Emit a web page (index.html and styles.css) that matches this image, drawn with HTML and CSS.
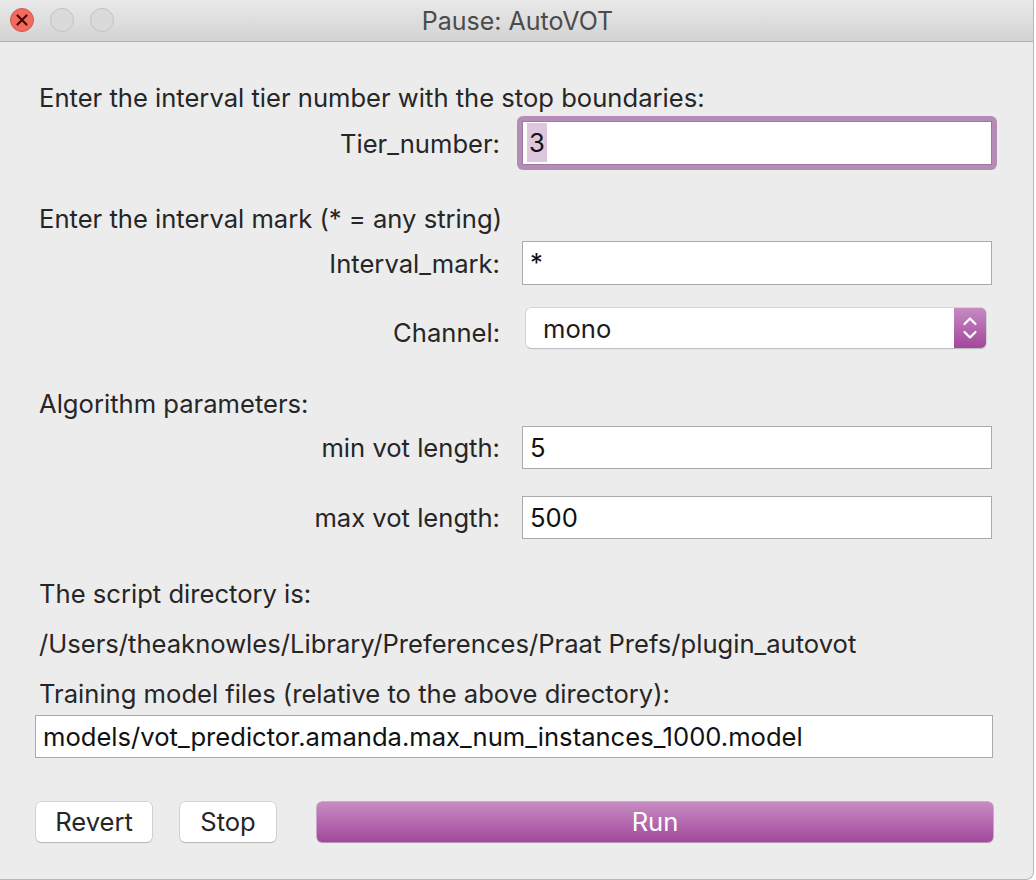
FILE: index.html
```html
<!DOCTYPE html>
<html>
<head>
<meta charset="utf-8">
<link rel="stylesheet" href="styles.css">
</head>
<body>
<div class="window">
  <div class="titlebar">
    <div class="lights">
      <span class="light close">
        <svg width="24" height="24" viewBox="0 0 24 24"><path d="M7.5 7.5 L16.5 16.5 M16.5 7.5 L7.5 16.5" stroke="#4a0502" stroke-width="2.2" stroke-linecap="round"/></svg>
      </span>
      <span class="light"></span>
      <span class="light"></span>
    </div>
    <div class="title">Pause: AutoVOT</div>
  </div>
  <div class="content">
    <div class="text h1">Enter the interval tier number with the stop boundaries:</div>
    <div class="row r-tier">
      <div class="label">Tier_number:</div>
      <div class="ring"><div class="field"><span class="sel">3</span></div></div>
    </div>
    <div class="text h2">Enter the interval mark (* = any string)</div>
    <div class="row r-mark">
      <div class="label">Interval_mark:</div>
      <div class="field plain">*</div>
    </div>
    <div class="row r-chan">
      <div class="label">Channel:</div>
      <div class="select">
        <span class="sel-text">mono</span>
        <span class="arrows">
          <svg width="32" height="40" viewBox="0 0 32 40"><path d="M10.5 16 L16 10.5 L21.5 16 M10.5 24 L16 29.5 L21.5 24" fill="none" stroke="#fff" stroke-width="2.2" stroke-linecap="round" stroke-linejoin="round"/></svg>
        </span>
      </div>
    </div>
    <div class="text h3">Algorithm parameters:</div>
    <div class="row r-min">
      <div class="label">min vot length:</div>
      <div class="field plain">5</div>
    </div>
    <div class="row r-max">
      <div class="label">max vot length:</div>
      <div class="field plain">500</div>
    </div>
    <div class="text h4">The script directory is:</div>
    <div class="text h5">/Users/theaknowles/Library/Preferences/Praat Prefs/plugin_autovot</div>
    <div class="text h6">Training model files (relative to the above directory):</div>
    <div class="field wide">models/vot_predictor.amanda.max_num_instances_1000.model</div>
    <div class="buttons">
      <div class="btn revert">Revert</div>
      <div class="btn stop">Stop</div>
      <div class="btn run">Run</div>
    </div>
  </div>
</div>
</body>
</html>
```

FILE: styles.css
```css
html, body {
  margin: 0;
  padding: 0;
  background: #ffffff;
}
body {
  width: 1036px;
  height: 880px;
  overflow: hidden;
  font-family: "Inter", "Liberation Sans", sans-serif;
  color: #262626;
}
.window {
  width: 1033px;
  height: 879px;
  background: #ececec;
  border-right: 1px solid #b8b8b8;
  border-bottom: 1px solid #b8b8b8;
  border-bottom-right-radius: 8px;
  overflow: hidden;
}
.titlebar {
  height: 41px;
  background: linear-gradient(#e9e9e9, #d3d3d3);
  border-bottom: 1px solid #b3b3b3;
  position: relative;
  display: flex;
  align-items: center;
  justify-content: center;
}
.lights {
  position: absolute;
  left: 10px;
  top: 8px;
  display: flex;
  gap: 16px;
}
.light {
  width: 22px;
  height: 22px;
  border-radius: 50%;
  border: 1px solid #c2c2c2;
  background: #dadada;
  display: flex;
  align-items: center;
  justify-content: center;
}
.light.close {
  background: #ef6b5f;
  border-color: #d8574c;
}
.light.close svg { flex: none; }
.light svg { display: block; }
.title {
  font-size: 25px;
  color: #4b4b4b;
  margin-left: 2px;
}
.content {
  padding: 43px 0 0 39px;
  font-size: 25.6px;
}
.text {
  height: 26px;
  line-height: 26px;
  white-space: nowrap;
}
.h2 { margin-top: 36px; }
.h3 { margin-top: 43px; }
.h4 { margin-top: 42px; }
.h5 { margin-top: 24px; }
.h6 { margin-top: 24px; }
.row {
  display: flex;
  align-items: center;
}
.label {
  width: 461px;
  text-align: right;
  flex: none;
}
.r-tier { margin-top: 5px; }
.r-tier .ring {
  margin-left: 17px;
  width: 470px;
  padding: 5px;
  background: #b48cb6;
  border-radius: 6px;
  box-sizing: content-box;
}
.field {
  background: #fff;
  border: 1px solid #aaaaaa;
  box-sizing: border-box;
  height: 44px;
  line-height: 42px;
  padding-left: 7px;
  font-size: 25.6px;
  color: #111;
  white-space: nowrap;
}
.ring .field {
  border-color: #9c7a9f;
  padding-left: 4px;
}
.sel {
  background: #dcc7df;
  padding: 4px 2px;
}
.field.plain {
  margin-left: 22px;
  width: 470px;
}
.r-mark { margin-top: 9px; }
.r-chan { margin-top: 23px; }
.r-chan .label { padding-top: 8px; }
.select {
  margin-left: 26px;
  width: 460px;
  height: 40px;
  box-sizing: border-box;
  background: #fff;
  border-radius: 5px;
  box-shadow: 0 0 0 0.5px #bdbdbd, 0 1px 1px rgba(0,0,0,0.2);
  display: flex;
  align-items: center;
  justify-content: space-between;
  overflow: hidden;
}
.sel-text {
  padding-left: 17px;
  color: #1c1c1c;
}
.arrows {
  width: 32px;
  height: 40px;
  background: linear-gradient(#c58bc2, #a3479c);
}
.arrows svg { display: block; }
.r-min { margin-top: 9px; }
.r-max { margin-top: 27px; }
.r-min .field, .r-max .field { height: 43px; line-height: 41px; }
.field.wide {
  margin-left: -4px;
  margin-top: 8px;
  width: 958px;
  height: 43px;
  line-height: 41px;
}
.buttons {
  margin-top: 44px;
  margin-left: -3px;
  display: flex;
  align-items: center;
}
.btn {
  height: 40px;
  box-sizing: border-box;
  line-height: 40px;
  text-align: center;
  background: #fff;
  border-radius: 5px;
  box-shadow: 0 0 0 0.5px #b9b9b9, 0 1px 1px rgba(0,0,0,0.22);
  font-size: 25.6px;
  color: #262626;
}
.revert { width: 116px; }
.stop { width: 96px; margin-left: 28px; }
.run {
  width: 676px;
  margin-left: 41px;
  background: linear-gradient(#c68cc3, #a3479c);
  color: #fff;
  box-shadow: 0 0 0 0.5px #a46aa1, 0 1px 1px rgba(0,0,0,0.18);
}
```
